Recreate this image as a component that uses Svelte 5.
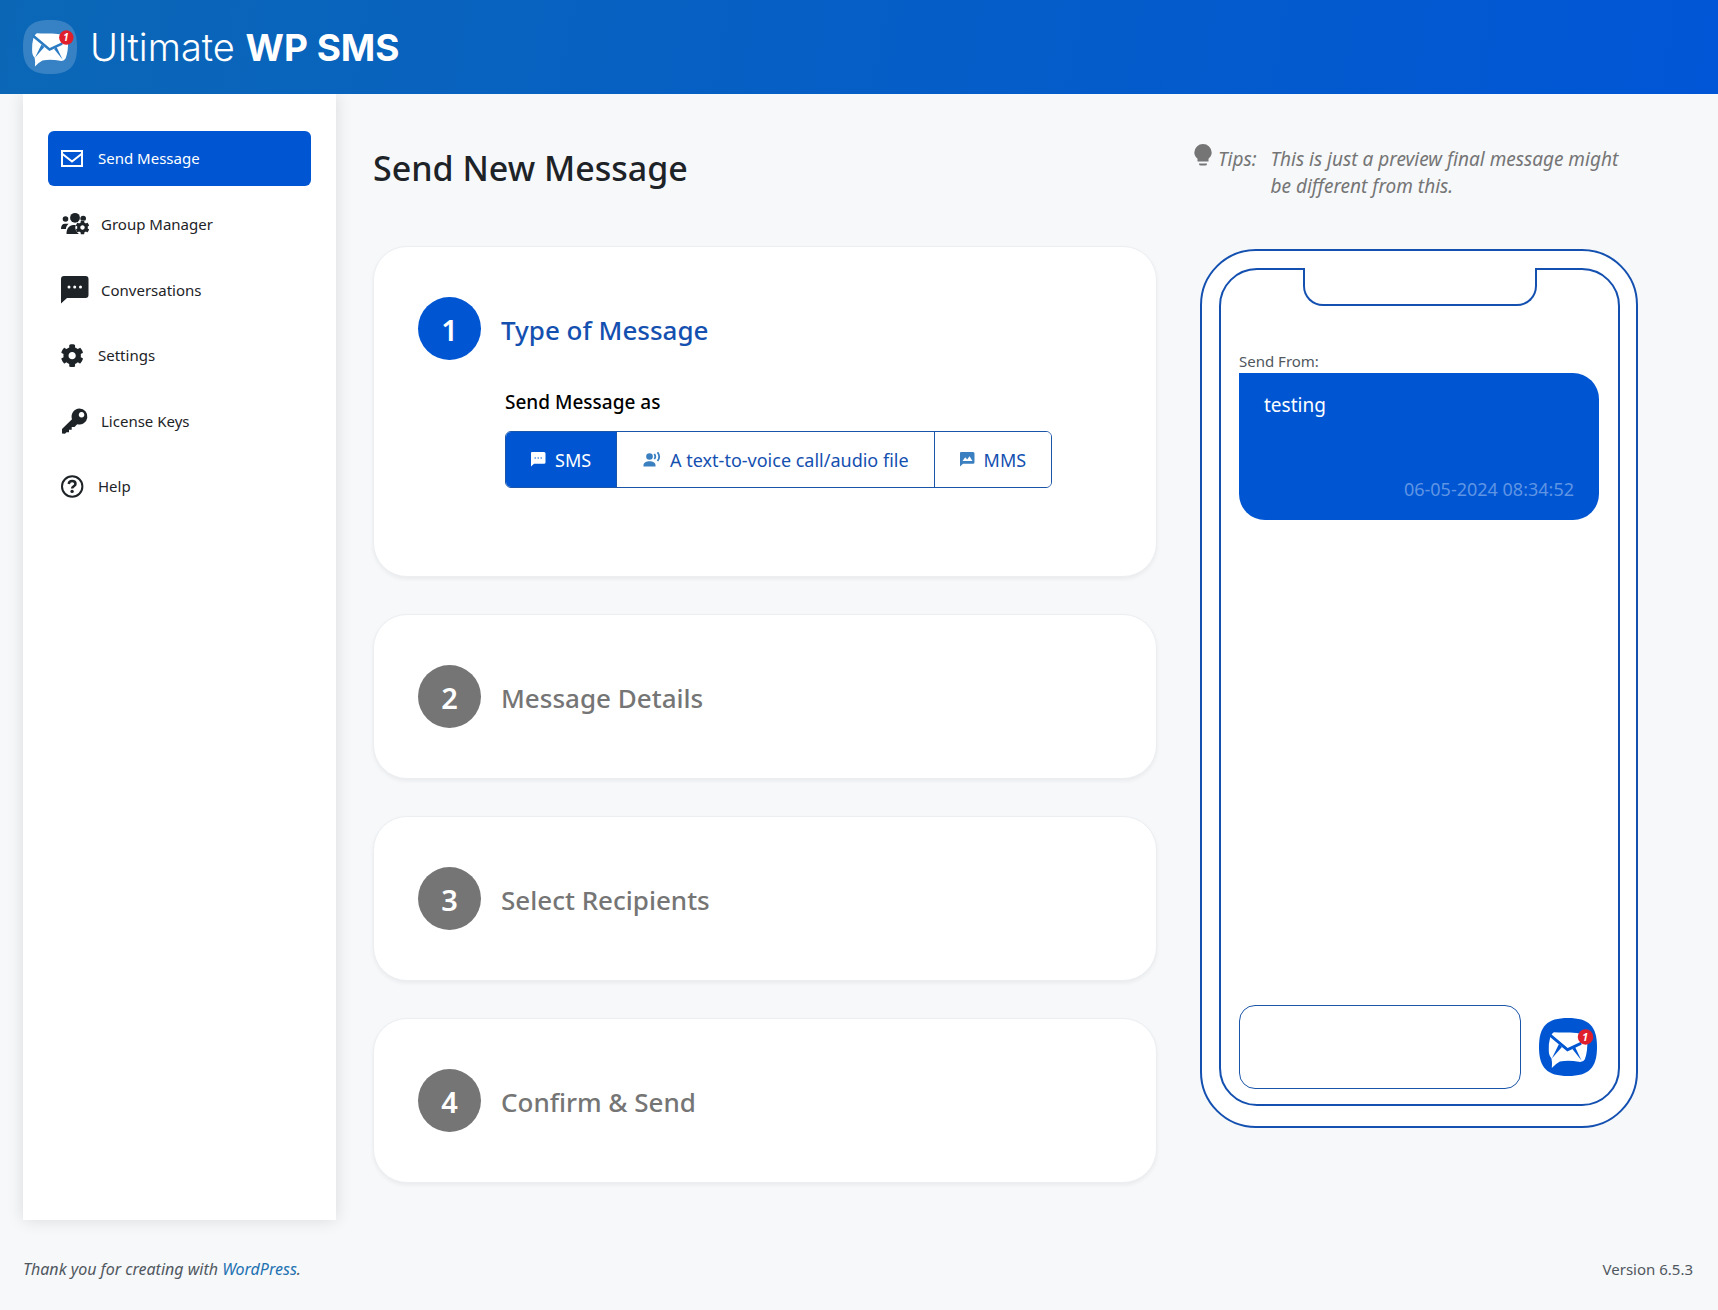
<script lang="ts">
	const nav = [
		{ icon: 'mail', label: 'Send Message', active: true },
		{ icon: 'group', label: 'Group Manager', large: true },
		{ icon: 'chat', label: 'Conversations', large: true },
		{ icon: 'gear', label: 'Settings' },
		{ icon: 'key', label: 'License Keys', large: true },
		{ icon: 'help', label: 'Help' }
	];

	const types = [
		{ id: 'sms', label: 'SMS' },
		{ id: 'voice', label: 'A text-to-voice call/audio file' },
		{ id: 'mms', label: 'MMS' }
	];

	const steps = ['Type of Message', 'Message Details', 'Select Recipients', 'Confirm & Send'];

	let messageType = $state('sms');
	let reply = $state('');

	const gear =
		'M487.4 315.7l-42.6-24.6c4.3-23.2 4.3-47 0-70.2l42.6-24.6c4.9-2.8 7.1-8.6 5.5-14-11.1-35.6-30-67.8-54.7-94.6-3.8-4.1-10-5.1-14.8-2.3L380.8 110c-17.9-15.4-38.5-27.3-60.8-35.1V25.8c0-5.6-3.9-10.5-9.4-11.7-36.7-8.2-74.3-7.8-109.2 0-5.5 1.2-9.4 6.1-9.4 11.7V75c-22.2 7.9-42.8 19.8-60.8 35.1L88.7 85.5c-4.9-2.8-11-1.9-14.8 2.3-24.7 26.7-43.6 58.9-54.7 94.6-1.7 5.4.6 11.2 5.5 14L67.3 221c-4.3 23.2-4.3 47 0 70.2l-42.6 24.6c-4.9 2.8-7.1 8.6-5.5 14 11.1 35.6 30 67.8 54.7 94.6 3.8 4.1 10 5.1 14.8 2.3l42.6-24.6c17.9 15.4 38.5 27.3 60.8 35.1v49.2c0 5.6 3.9 10.5 9.4 11.7 36.7 8.2 74.3 7.8 109.2 0 5.5-1.2 9.4-6.1 9.4-11.7v-49.2c22.2-7.9 42.8-19.8 60.8-35.1l42.6 24.6c4.9 2.8 11 1.9 14.8-2.3 24.7-26.7 43.6-58.9 54.7-94.6 1.5-5.5-.7-11.3-5.6-14.1zM256 336c-44.1 0-80-35.9-80-80s35.9-80 80-80 80 35.9 80 80-35.9 80-80 80z';
</script>

{#snippet logo()}
	<svg viewBox="0 0 172 172" aria-hidden="true">
		<path class="plate" d="M86 0C148 0 172 24 172 86S148 172 86 172 0 148 0 86 24 0 86 0z" />
		<path
			class="paper"
			d="M44 42C70 45 96 41 120 46Q140 48 143 66Q145 98 136 122Q131 132 118 130Q88 124 62 129Q52 134 38 148Q40 134 37 120Q29 112 29 96Q28 76 33 58Q36 46 44 42z"
		/>
		<path class="fold" d="M33 45L85 89L126 70L126 79L84 99L31 55z" />
		<path class="fold" d="M59 78L68 86L38 120z" />
		<path class="fold" d="M99 92L107 86L126 126z" />
		<circle cx="138" cy="56" r="23" fill="#e01f2d" />
		<text x="137" y="67" text-anchor="middle">1</text>
	</svg>
{/snippet}

{#snippet icon(name: string)}
	{#if name === 'mail'}
		<svg viewBox="0 0 24 24" aria-hidden="true">
			<path d="M1 4h20v15H1zM1.500 7l9.500 7.500L20.500 7" fill="none" stroke="currentColor" stroke-width="2" />
		</svg>
	{:else if name === 'group'}
		<svg viewBox="0 0 28 28" aria-hidden="true">
			<g fill="currentColor">
				<circle cx="4.500" cy="9" r="2.800" />
				<circle cx="14" cy="7.800" r="4.900" />
				<circle cx="22.200" cy="8.500" r="2.800" />
				<path d="M0 19c0-3.500 1.500-5.200 4-5.200h3.600c-1.700 1.500-2.600 3.200-2.700 5.200z" />
				<path d="M5.500 24c0-5.500 2.800-9 6.800-9h4c-1.500 3-1 7 1.800 9z" />
			</g>
			<circle cx="21.500" cy="17.500" r="7.200" fill="#fff" />
			<g transform="translate(14.400 10.400) scale(.0277)"><path d={gear} fill="currentColor" /></g>
		</svg>
	{:else if name === 'chat'}
		<svg viewBox="0 0 28 28" aria-hidden="true">
			<path d="M3 0h21.500a3 3 0 0 1 3 3v16a3 3 0 0 1-3 3H6L0 27.500V3a3 3 0 0 1 3-3z" fill="currentColor" />
			<g fill="#fff"><circle cx="8" cy="11" r="1.500" /><circle cx="13.700" cy="11" r="1.500" /><circle cx="19.500" cy="11" r="1.500" /></g>
		</svg>
	{:else if name === 'gear'}
		<svg viewBox="0 0 24 24" aria-hidden="true">
			<g transform="translate(-.5 0) scale(.0455)"><path d={gear} fill="currentColor" /></g>
		</svg>
	{:else if name === 'key'}
		<svg viewBox="0 0 28 28" aria-hidden="true">
			<path
				fill="currentColor"
				fill-rule="evenodd"
				d="M18.500 1.500a8 8 0 1 1-2.300 15.700L13.500 20h-2.800v2.700H8v2.600H5.500L4 26.800 1 26.500V22L11 12.200A8 8 0 0 1 18.500 1.500zm2 3.500a2.800 2.800 0 1 0 .1 0z"
			/>
		</svg>
	{:else if name === 'help'}
		<svg viewBox="0 0 24 24" aria-hidden="true">
			<circle cx="11.200" cy="11.500" r="10.200" fill="none" stroke="currentColor" stroke-width="2" />
			<path d="M7.700 9c.3-2 1.600-3 3.400-3 2 0 3.400 1.100 3.400 2.900 0 2.400-3.400 2.400-3.400 4.700" fill="none" stroke="currentColor" stroke-width="2.500" />
			<circle cx="11.100" cy="16.400" r="1.700" fill="currentColor" />
		</svg>
	{:else if name === 'sms'}
		<svg viewBox="0 0 16 16" aria-hidden="true">
			<path d="M1 0h12a1.500 1.500 0 0 1 1.500 1.500v8.700A1.500 1.500 0 0 1 13 11.700H3L0 14.500V1A1 1 0 0 1 1 0z" fill="#fff" />
			<path d="M3.500 5.200H5v1.500H3.500zm3 0H8v1.500H6.500zm3 0H11v1.500H9.500z" fill="#5b92e2" />
		</svg>
	{:else if name === 'voice'}
		<svg class="wide" viewBox="0 0 18 16" aria-hidden="true">
			<circle cx="6.500" cy="4.500" r="3.300" fill="#3a7fc0" />
			<path d="M.5 14.500V13C.5 10.500 3.500 9.200 6.500 9.200s6 1.300 6 3.800v1.500z" fill="#3a7fc0" />
			<path d="M11.300 2a4 4 0 0 1 0 5M14.500.3a7 7 0 0 1 0 8.700" fill="none" stroke="#3a7fc0" stroke-width="1.800" />
		</svg>
	{:else if name === 'mms'}
		<svg viewBox="0 0 16 16" aria-hidden="true">
			<path d="M1 0h12a1.500 1.500 0 0 1 1.500 1.500v8.700A1.500 1.500 0 0 1 13 11.700H3L0 14.500V1A1 1 0 0 1 1 0z" fill="#3a7fc0" />
			<path d="M2.500 9l2.700-3.800 2 2.300L9.500 4.300l3 4.700z" fill="#fff" />
		</svg>
	{/if}
{/snippet}

<div class="page">
	<header class="topbar">
		<span class="brand-logo">{@render logo()}</span>
		<span class="brand">Ultimate <b>WP SMS</b></span>
	</header>

	<div class="body">
		<nav class="sidebar" aria-label="Plugin">
			{#each nav as item}
				<a href="#{item.icon}" class="nav-item" class:active={item.active} class:large={item.large}>
					{@render icon(item.icon)}
					<span>{item.label}</span>
				</a>
			{/each}
		</nav>

		<main class="content">
			<section class="composer">
				<h1>Send New Message</h1>
				<div class="steps">
					{#each steps as step, i}
						<div class="card" class:open={i === 0}>
							<span class="number">{i + 1}</span>
							<h2>{step}</h2>
							{#if i === 0}
								<div class="step-body">
									<p class="label" id="send-as">Send Message as</p>
									<div class="segments" role="group" aria-labelledby="send-as">
										{#each types as type}
											<button
												type="button"
												class:selected={messageType === type.id}
												aria-pressed={messageType === type.id}
												onclick={() => (messageType = type.id)}
											>
												{@render icon(type.id)}
												{type.label}
											</button>
										{/each}
									</div>
								</div>
							{/if}
						</div>
					{/each}
				</div>
			</section>

			<aside class="preview">
				<div class="tips">
					<svg viewBox="0 0 18 24" aria-hidden="true">
						<path d="M9 0a8.700 8.700 0 0 1 8.700 8.500c0 3-1.700 4.800-3.200 6.200V17.500h-11v-2.800C2 13.300.3 11.500.3 8.500A8.700 8.700 0 0 1 9 0zM5 19.500h8v.5q0 1.500-2 1.500H7Q5 21.500 5 20z" />
					</svg>
					<span>Tips:</span>
					<p>This is just a preview final message might be different from this.</p>
				</div>

				<div class="phone">
					<div class="screen">
						<div class="notch"></div>
						<p class="from">Send From:</p>
						<div class="bubble">
							<p>testing</p>
							<time>06-05-2024 08:34:52</time>
						</div>
						<div class="reply">
							<input type="text" aria-label="Reply" bind:value={reply} />
							<span class="reply-logo">{@render logo()}</span>
						</div>
					</div>
				</div>
			</aside>
		</main>
	</div>

	<footer class="footer">
		<em>Thank you for creating with <a href="#wordpress">WordPress</a>.</em>
		<span>Version 6.5.3</span>
	</footer>
</div>

<style>
	:global(body) {
		margin: 0;
		background: #f6f8fa;
	}

	.page {
		min-height: 100vh;
		display: flex;
		flex-direction: column;
		font-family: 'Noto Sans', 'Open Sans', sans-serif;
		font-size: 15px;
		color: #1d2327;
	}

	.page *,
	.page {
		box-sizing: border-box;
	}

	h1,
	h2,
	p {
		margin: 0;
	}

	svg {
		display: block;
		flex: none;
	}

	.topbar {
		height: 94px;
		padding: 0 23px;
		display: flex;
		align-items: center;
		gap: 13px;
		background: linear-gradient(100deg, #0b67b6, #0056d6);
		color: #fff;
	}

	.brand-logo {
		width: 54px;
		--plate: rgba(255, 255, 255, 0.18);
		--fold: #2b7bc3;
	}

	.brand {
		font-family: Inter, sans-serif;
		font-weight: 300;
		font-size: 38px;
		line-height: 54px;
	}

	.brand b {
		font-weight: 700;
		font-size: 37px;
	}

	.plate {
		fill: var(--plate);
	}

	.paper {
		fill: #fff;
	}

	.fold {
		fill: var(--fold);
	}

	text {
		font: italic 700 31px 'Noto Sans', sans-serif;
		fill: #fff;
	}

	.body {
		flex: 1;
		display: flex;
		padding-left: 23px;
	}

	.sidebar {
		width: 313px;
		flex: none;
		padding: 37px 25px;
		display: flex;
		flex-direction: column;
		gap: 10px;
		background: #fff;
		box-shadow: 0 0 16px rgba(0, 0, 0, 0.12);
		clip-path: inset(0 -24px -24px -24px);
	}

	.nav-item {
		display: flex;
		align-items: center;
		gap: 13px;
		padding: 14px 13px;
		border-radius: 6px;
		color: #1d2327;
		text-decoration: none;
		line-height: 27px;
	}

	.nav-item svg {
		width: 24px;
		height: 24px;
	}

	.nav-item.large {
		gap: 12px;
		line-height: 24px;
	}

	.nav-item.large svg {
		width: 28px;
		height: 28px;
	}

	.nav-item.active {
		background: #0056d2;
		color: #fff;
	}

	.content {
		flex: 1;
		min-width: 0;
		padding: 0 80px 37px 37px;
		display: grid;
		grid-template-columns: minmax(0, 1fr) 438px;
		gap: 43px;
		align-items: start;
	}

	h1 {
		padding: 50px 0 54px;
		font-size: 34px;
		line-height: 48px;
		font-weight: 500;
	}

	.steps {
		display: flex;
		flex-direction: column;
		gap: 37px;
	}

	.card {
		display: grid;
		grid-template-columns: 63px 1fr;
		column-gap: 20px;
		align-items: center;
		padding: 50px 44px;
		border: 1px solid #eceff2;
		border-radius: 34px;
		background: #fff;
		box-shadow: 0 2px 4px rgba(0, 0, 0, 0.06);
	}

	.card.open {
		padding-bottom: 88px;
	}

	.number {
		height: 63px;
		border-radius: 50%;
		background: #757575;
		color: #fff;
		font-size: 29px;
		line-height: 66px;
		font-weight: 600;
		text-align: center;
	}

	h2 {
		padding-top: 3px;
		color: #757575;
		font-size: 26px;
		line-height: 36px;
		font-weight: 500;
	}

	.open .number {
		background: #0056d2;
	}

	.open h2 {
		color: #1450b0;
	}

	.step-body {
		grid-column: 2;
		padding: 28px 4px 0;
	}

	.label {
		color: #000;
		font-size: 19px;
		line-height: 28px;
		font-weight: 500;
	}

	.segments {
		display: inline-flex;
		margin-top: 15px;
		border: 1px solid #1a55a8;
		border-radius: 6px;
		overflow: hidden;
	}

	.segments button {
		display: flex;
		align-items: center;
		gap: 8px;
		padding: 15px 25px 14px;
		border: 0;
		border-left: 1px solid #1a55a8;
		background: #fff;
		color: #1450b0;
		font: inherit;
		font-size: 18px;
		line-height: 26px;
	}

	.segments button:first-child {
		border-left: 0;
	}

	.segments button.selected {
		background: #0056d2;
		color: #fff;
	}

	.segments svg {
		width: 16px;
		height: 16px;
	}

	.segments svg.wide {
		width: 20px;
	}

	.tips {
		min-height: 155px;
		display: flex;
		padding-top: 52px;
		color: #757575;
		font-size: 19px;
		line-height: 27px;
		font-style: italic;
	}

	.tips svg {
		width: 18px;
		height: 24px;
		margin: -2px 0 0 -6px;
		fill: #757575;
	}

	.tips span {
		margin: 0 14px 0 6px;
	}

	.phone {
		padding: 17px 16px 20px 17px;
		border: 2px solid #1450b0;
		border-radius: 56px;
		background: #fff;
	}

	.screen {
		position: relative;
		min-height: 838px;
		padding: 80px 19px 15px 18px;
		display: flex;
		flex-direction: column;
		border: 2px solid #1450b0;
		border-radius: 38px;
	}

	.notch {
		position: absolute;
		top: -2px;
		left: 50%;
		width: 234px;
		height: 38px;
		transform: translateX(-50%);
		border: 2px solid #1450b0;
		border-top: 0;
		border-radius: 0 0 20px 20px;
		background: #fff;
	}

	.from {
		color: #50575e;
		line-height: 23px;
	}

	.bubble {
		min-height: 147px;
		padding: 19px 25px;
		display: flex;
		flex-direction: column;
		justify-content: space-between;
		border-radius: 0 26px 26px 26px;
		background: #0056d2;
		color: #fff;
		font-size: 19px;
		line-height: 27px;
	}

	.bubble time {
		align-self: flex-end;
		color: #5f94e4;
		font-size: 18px;
		line-height: 24px;
	}

	.reply {
		margin-top: auto;
		padding-right: 2px;
		display: flex;
		align-items: center;
		gap: 18px;
	}

	.reply input {
		flex: 1;
		min-width: 0;
		height: 84px;
		padding: 0 16px;
		border: 1px solid #1a55a8;
		border-radius: 16px;
		background: #fff;
		font: inherit;
	}

	.reply-logo {
		width: 58px;
		--plate: #0056d2;
		--fold: #0056d2;
	}

	.footer {
		display: flex;
		justify-content: space-between;
		padding: 37px 25px 29px 23px;
		color: #50575e;
		line-height: 24px;
	}

	.footer em {
		font-size: 16px;
	}

	.footer a {
		color: #2271b1;
		text-decoration: none;
	}
</style>
